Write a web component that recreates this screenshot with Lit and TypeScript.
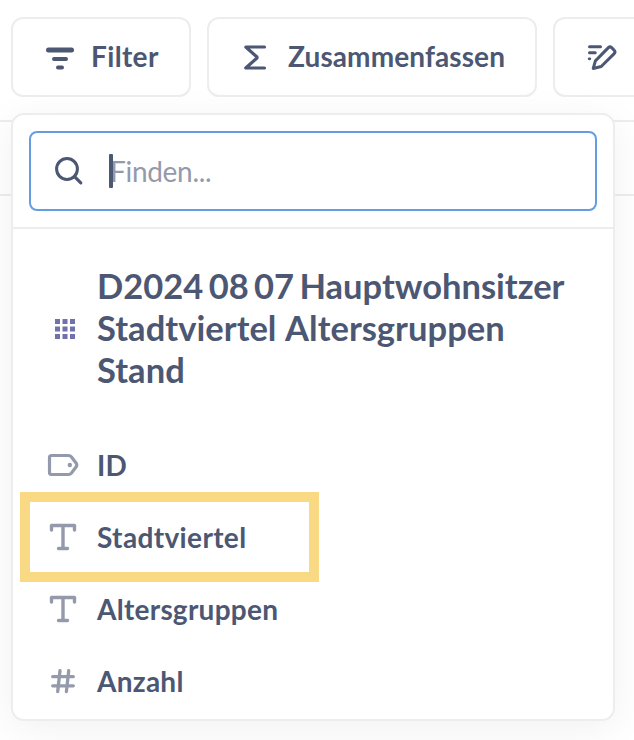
import { LitElement, html, css, svg, nothing } from "lit";
import { customElement, property } from "lit/decorators.js";
import { classMap } from "lit/directives/class-map.js";

const stroke = (d: string, w = 3) =>
  svg`<path d=${d} fill="none" stroke="currentColor" stroke-width=${w} stroke-linecap="round" stroke-linejoin="round"></path>`;

const shapes: Record<string, unknown> = {
  filter: svg`${stroke("M4.5 9H27.5", 5)}${stroke("M10 18H22", 4)}${stroke("M14 26.5H18", 4)}`,
  sum: stroke("M25.5 6H6.8L18 16V17L6.8 27H25.5", 3.2),
  notebook: svg`${stroke("M3.5 5.8H14.5", 3)}${stroke("M3.5 11.8H9.2", 3)}${stroke("M3.2 17.8H3.8", 2.8)}
    ${stroke("M7.2 27.5L9.4 19.9L22.4 6.6Q24 5 25.6 6.6L28.2 9.3Q29.8 11 28.2 12.6L15.2 25.5Z", 3)}`,
  search: svg`<circle cx="14" cy="14" r="10.4" fill="none" stroke="currentColor" stroke-width="3"></circle>${stroke("M21.6 21.6L27.8 27.8", 3.2)}`,
  table: svg`${[6, 13.5, 21].map((y) => [6, 13.5, 21].map((x) => svg`<rect x=${x} y=${y} width="5" height="5" fill="currentColor"></rect>`))}`,
  label: svg`${stroke("M4.5 6.5H21.5Q23.3 6.5 24.5 8L29.2 14.2Q30.3 16 29.2 17.8L24.5 24Q23.3 25.5 21.5 25.5H4.5Q2.5 25.5 2.5 23.5V8.5Q2.5 6.5 4.5 6.5Z", 3.2)}<circle cx="22.8" cy="16" r="2.2" fill="currentColor"></circle>`,
  string: stroke("M4.5 9V4.5H27.5V9M16 4.5V27.5M11.5 27.5H20.5", 3.4),
  int: stroke("M5.7 11.7H26.3M5.7 20.8H26.3M13 5.7L10.7 26.6M21.7 5.7L19.4 26.6", 3.3),
};

@customElement("app-icon")
class AppIcon extends LitElement {
  @property() name = "";
  static styles = css`
    :host { display: block; flex: none; width: 32px; height: 32px; }
    .glyph { display: block; width: 32px; height: 32px; }
  `;
  render() {
    return html`<svg class="glyph" viewBox="0 0 32 32">${shapes[this.name]}</svg>`;
  }
}

@customElement("app-root")
class AppRoot extends LitElement {
  static styles = css`
    :host {
      display: block; position: relative; height: 740px; overflow: hidden;
      background: #fff; color: #4c5773;
      font-family: Lato, sans-serif; font-weight: 700; font-size: 28px; line-height: 34px;
    }
    *, *::after { box-sizing: border-box; }
    .toolbar { display: flex; gap: 16px; height: 120px; padding: 17px 0 0 11px; }
    .button {
      display: flex; align-items: center; flex: none; gap: 15px; height: 80px; padding: 0 0 0 31px;
      border: 2px solid #eeecec; border-radius: 12px; white-space: nowrap;
    }
    .text { padding-bottom: 2px; }
    .filter { width: 180px; letter-spacing: 0.35px; }
    .sum { width: 330px; gap: 17px; padding-left: 30px; letter-spacing: 0.1px; }
    .notebook { width: 180px; }
    .strip { height: 76px; border: solid #eeecec; border-width: 2px 0; }
    .popover {
      position: absolute; left: 11px; top: 113px; width: 604px; height: 608px;
      border: 2px solid #eeecec; border-radius: 13px; background: #fff;
      box-shadow: 0 8px 40px rgba(0, 0, 0, 0.06);
    }
    .search { padding: 16px; border-bottom: 2px solid #eeecec; }
    .field {
      display: flex; align-items: center; height: 80px; padding-left: 22px;
      border: 2px solid #649ee0; border-radius: 8px;
    }
    .caret { width: 4px; height: 34px; margin-left: 24px; border-radius: 1px; background: #4c5773; z-index: 1; }
    .placeholder { margin-left: -3px; color: #949aab; font-weight: 400; letter-spacing: -0.3px; }
    .section { display: flex; align-items: center; gap: 16px; padding: 36px 0 39px 36px; color: #7172ad; }
    .section app-icon { margin-top: 2px; }
    .title { margin: 0; width: 480px; color: #4c5773; font-size: 34.5px; line-height: 42px; font-weight: 700; }
    .digits { word-spacing: -3px; }
    .words { word-spacing: 1.3px; letter-spacing: 0.05px; }
    .row { display: flex; align-items: center; gap: 18px; position: relative; height: 72px; padding-left: 34px; letter-spacing: 0.27px; }
    .row app-icon { margin-top: -2px; color: #949aab; }
    .marked { letter-spacing: 0.36px; }
    .marked::after {
      content: ""; position: absolute; left: 7px; top: -10px; width: 299px; height: 90px;
      border: 10px solid #f9d984;
    }
  `;
  render() {
    const fields = [
      { icon: "label", name: "ID" },
      { icon: "string", name: "Stadtviertel", marked: true },
      { icon: "string", name: "Altersgruppen" },
      { icon: "int", name: "Anzahl" },
    ];
    const buttons = [
      { icon: "filter", text: "Filter" },
      { icon: "sum", text: "Zusammenfassen" },
      { icon: "notebook", text: "" },
    ];
    return html`
      <div class="toolbar">
        ${buttons.map((b) => html`<div class="button ${b.icon}"><app-icon name=${b.icon}></app-icon>${b.text ? html`<span class="text">${b.text}</span>` : nothing}</div>`)}
      </div>
      <div class="strip"></div>
      <div class="popover">
        <div class="search">
          <div class="field"><app-icon name="search"></app-icon><span class="caret"></span><span class="placeholder">Finden...</span></div>
        </div>
        <div class="section">
          <app-icon name="table"></app-icon>
          <h3 class="title"><span class="digits">D2024 08 07 Hauptwohnsitzer</span> <span class="words">Stadtviertel Altersgruppen Stand</span></h3>
        </div>
        ${fields.map((f) => html`<div class=${classMap({ row: true, marked: !!f.marked })}><app-icon name=${f.icon}></app-icon><span class="text">${f.name}</span></div>`)}
      </div>
    `;
  }
}
